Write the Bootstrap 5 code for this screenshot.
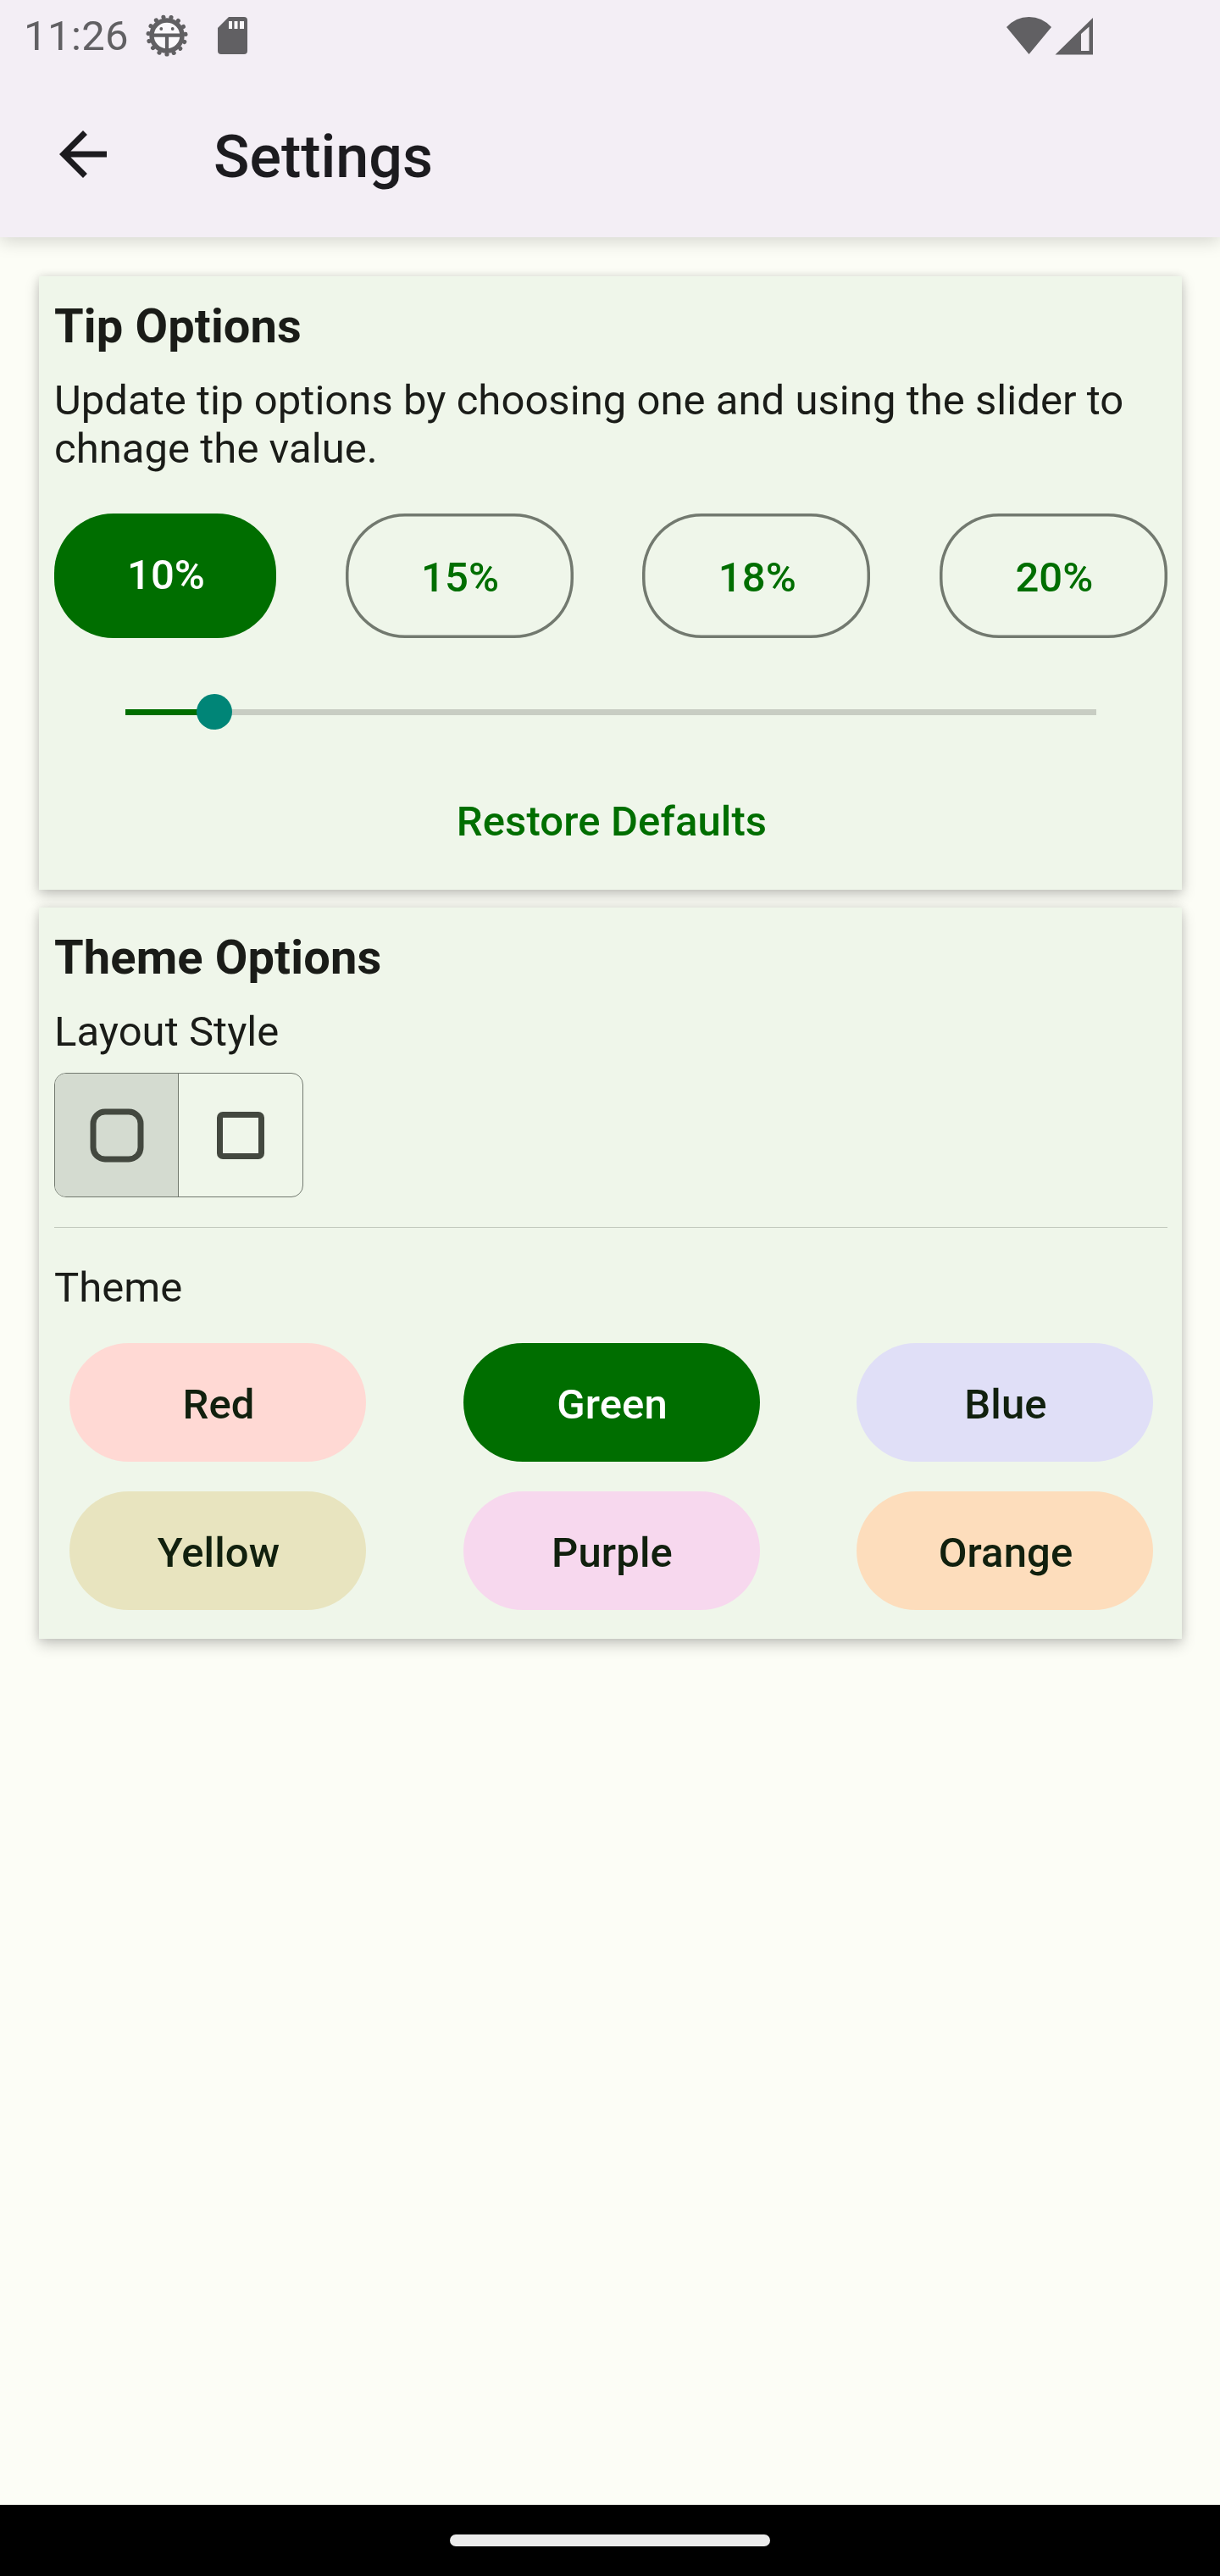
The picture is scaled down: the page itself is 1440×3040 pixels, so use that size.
<!DOCTYPE html>
<html lang="en">
<head>
<meta charset="utf-8">
<meta name="viewport" content="width=device-width, initial-scale=1">
<title>Settings</title>
<link rel="stylesheet" href="https://cdn.jsdelivr.net/npm/bootstrap@5.3.0/dist/css/bootstrap.min.css">
<style>
  body { font-family: Roboto, "Liberation Sans", sans-serif; font-size: 49px; line-height: 57px; color: #1a1c18; background: #fcfdf6; height: 3040px; overflow: hidden; }
  svg { display: block; flex: none; }
  .top-area { height: 280px; background: #f3eef5; box-shadow: 0 4px 20px rgba(0,0,0,.17); flex: none; }
  .status-bar { height: 84px; padding: 0 150px 0 28px; color: #616063; }
  .clock { width: 144px; letter-spacing: .4px; padding-top: 1px; }
  .sd-icon { margin-left: 35px; }
  .app-bar { height: 196px; padding: 0 70px; color: #1c1b1f; }
  .app-title { font-size: 70px; line-height: 82px; font-weight: 500; margin: 5px 0 0 126px; }
  .content-area { padding: 46px 45px 0 46px; gap: 21px; }
  .panel { background: #eff6ea; border: 0; border-radius: 0; padding: 0 17px 0 18px; color: #1a1c18; box-shadow: 0 7px 16px rgba(0,0,0,.2), 0 0 10px rgba(0,0,0,.1); }
  .tip-panel { height: 724px; }
  .theme-panel { height: 863px; }
  .panel-title { font-size: 56px; line-height: 66px; font-weight: 700; margin: 26px 0 0; letter-spacing: .13px; }
  .panel-text { letter-spacing: .04px; margin: 26px 0 0; }
  .tip-row { margin-top: 48px; }
  .btn { --bs-btn-font-size: 49px; --bs-btn-font-weight: 500; --bs-btn-line-height: 57px; --bs-btn-border-width: 0; border-radius: 70px; padding: 0 0 0 2px; letter-spacing: .13px; }
  .tip-btn { width: 269px; height: 147px; box-shadow: inset 0 0 0 3.5px #72796f; color: #006e00; padding-top: 4px; }
  .tip-btn.selected { width: 262px; box-shadow: none; background: #006e00; color: #fff; padding: 0 0 3px 2px; }
  .slider { margin: 66px 84px 0 84px; height: 42px; }
  .slider .progress { height: 7px; border-radius: 0; background: #c8cdc3; width: 100%; }
  .slider .progress-bar { background: #006e00; }
  .thumb { width: 42px; height: 42px; border-radius: 50%; background: #008577; top: 0; transform: translateX(-50%); }
  .restore { color: #006e00; margin-top: 80px; }
  .layout-group { width: 294px; height: 147px; border: 1px solid #72796f; border-radius: 14px; margin-top: 20px; overflow: hidden; }
  .layout-group .cell { flex: 1; }
  .layout-group .cell:first-child { flex: 0 0 146px; background: #d4dbd0; border-right: 1px solid #72796f; }
  .rule { height: 1px; background: #c2c9bd; margin: 35px 0 0; opacity: 1; border: 0; }
  .theme-label { margin-top: 42px; letter-spacing: .04px; }
  .theme-grid { margin: 37px 17px 0 18px; row-gap: 35px; }
  .theme-btn { width: 350px; height: 140px; color: #11200e; padding-top: 4px; }
  .nav-pill-area { height: 84px; background: #000; }
  .nav-handle { width: 378px; height: 14px; border-radius: 7px; background: #ebebeb; }
</style>
<script src="https://cdn.jsdelivr.net/npm/bootstrap@5.3.0/dist/js/bootstrap.bundle.min.js"></script>
</head>
<body class="d-flex flex-column">
  <header class="top-area">
    <div class="status-bar d-flex align-items-center">
      <span class="clock">11:26</span>
      <svg width="50" height="50" viewBox="-25 -25 50 50" fill="none" stroke="currentColor">
        <circle r="18" stroke-width="5.400" fill="#faf8fb"/>
        <circle r="22" stroke-width="5.200" stroke-linecap="round" stroke-dasharray="0.010 9.205" transform="rotate(90)"/>
        <path d="M-18-.3H18M0-1V18" stroke-width="4.200"/>
        <circle cx="-6.700" cy="-8" r="1.900" fill="currentColor" stroke="none"/>
        <circle cx="6.700" cy="-8" r="1.900" fill="currentColor" stroke="none"/>
      </svg>
      <svg class="sd-icon me-auto" width="35" height="44" viewBox="0 0 35 44"><path fill="currentColor" d="M13 0H31Q35 0 35 4V40Q35 44 31 44H4Q0 44 0 40V13Z"/><path fill="#faf8fb" d="M13 5V14H17V5ZM19.500 5V14H23.500V5ZM26 5V14H31V5Z"/></svg>
      <svg width="102" height="45" viewBox="0 0 102 45" fill="currentColor"><path d="M0 12Q11 0 26.500 0T53 12L26.500 44Z"/><path fill-rule="evenodd" d="M57.500 44.500 102 1V44.500ZM88 20V40H97.500V11.500Z"/></svg>
    </div>
    <div class="app-bar d-flex align-items-center">
      <svg width="56" height="56" viewBox="4 4 16 16" fill="currentColor"><path d="M20 11H7.830l5.590-5.590L12 4l-8 8 8 8 1.410-1.410L7.830 13H20v-2z"/></svg>
      <h1 class="app-title">Settings</h1>
    </div>
  </header>
  <main class="content-area d-flex flex-column flex-grow-1">
    <section class="card panel tip-panel">
      <h2 class="panel-title">Tip Options</h2>
      <p class="panel-text">Update tip options by choosing one and using the slider to chnage the value.</p>
      <div class="tip-row d-flex justify-content-between">
        <button class="btn tip-btn selected">10%</button>
        <button class="btn tip-btn">15%</button>
        <button class="btn tip-btn">18%</button>
        <button class="btn tip-btn">20%</button>
      </div>
      <div class="slider d-flex align-items-center position-relative">
        <div class="progress"><div class="progress-bar" style="width:9.2%"></div></div>
        <span class="thumb position-absolute" style="left:9.2%"></span>
      </div>
      <button class="btn restore align-self-center">Restore Defaults</button>
    </section>
    <section class="card panel theme-panel">
      <h2 class="panel-title">Theme Options</h2>
      <p class="panel-text">Layout Style</p>
      <div class="layout-group d-flex">
        <div class="cell d-flex align-items-center justify-content-center"><svg width="64" height="64" viewBox="0 0 64 64"><rect x="4" y="4" width="56" height="56" rx="14" fill="none" stroke="#43483f" stroke-width="7"/></svg></div>
        <div class="cell d-flex align-items-center justify-content-center"><svg width="56" height="56" viewBox="0 0 56 56"><rect x="3.500" y="3.500" width="49" height="49" rx="3.500" fill="none" stroke="#43483f" stroke-width="7"/></svg></div>
      </div>
      <hr class="rule">
      <div class="theme-label">Theme</div>
      <div class="theme-grid d-flex flex-wrap justify-content-between">
        <button class="btn theme-btn" style="background:#ffd9d4">Red</button>
        <button class="btn theme-btn" style="background:#006e00;color:#fff">Green</button>
        <button class="btn theme-btn" style="background:#e0dff7">Blue</button>
        <button class="btn theme-btn" style="background:#e8e4bf">Yellow</button>
        <button class="btn theme-btn" style="background:#f7d8ee">Purple</button>
        <button class="btn theme-btn" style="background:#fdddbc">Orange</button>
      </div>
    </section>
  </main>
  <footer class="nav-pill-area d-flex align-items-center justify-content-center"><div class="nav-handle"></div></footer>
</body>
</html>
